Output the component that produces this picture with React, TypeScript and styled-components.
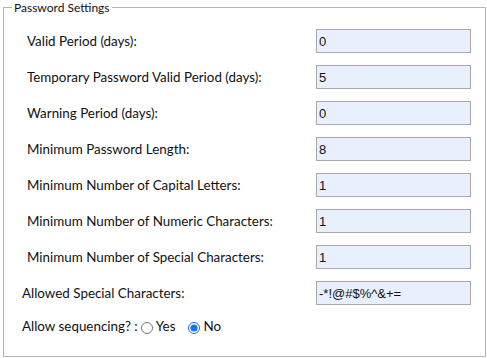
import React, { useState } from "react";
import styled, { createGlobalStyle } from "styled-components";

const GlobalStyle = createGlobalStyle`
    body {
        margin: 0;
        background: #ffffff;
        font-family: Lato, "Liberation Sans", sans-serif;
        color: #111111;
    }
`;

const Page = styled.div`
    padding: 0 1px 0 3px;
`;

const Fieldset = styled.fieldset`
    margin: 0;
    padding: 8px 0 15px 8px;
    border: 1px solid #b4b4b4;
    min-width: 0;
`;

const Legend = styled.legend`
    padding: 0 2px;
    font-size: 12px;
    line-height: 15px;
    color: #111111;
`;

const Row = styled.div<{ $indent: number; $height: number }>`
    display: grid;
    grid-template-columns: 1fr 155px;
    align-items: center;
    height: ${(p) => p.$height}px;
    padding-left: ${(p) => p.$indent}px;
    padding-right: 14px;
`;

const Label = styled.label`
    font-size: 13.4px;
    line-height: 18px;
`;

const TextBox = styled.input`
    box-sizing: border-box;
    width: 155px;
    height: 24px;
    margin: 0;
    padding: 0 2px;
    border: 1px solid #a8a8a8;
    border-radius: 0;
    background: #e8f0fe;
    font-family: "Liberation Sans", Arial, sans-serif;
    font-size: 13px;
    color: #111111;
    outline: none;
`;

const RadioLine = styled.div`
    display: flex;
    align-items: center;
    height: 30px;
    padding-left: 10px;
    font-size: 13.4px;
`;

const Option = styled.label`
    display: flex;
    align-items: center;
    margin-left: 3px;

    & + & {
        margin-left: 13px;
    }

    input {
        width: 12px;
        height: 12px;
        margin: 3px 3px 0 0;
        accent-color: #1a73e8;
    }
`;

const fields = [
    { label: "Valid Period (days):", value: "0" },
    { label: "Temporary Password Valid Period (days):", value: "5" },
    { label: "Warning Period (days):", value: "0" },
    { label: "Minimum Password Length:", value: "8" },
    { label: "Minimum Number of Capital Letters:", value: "1" },
    { label: "Minimum Number of Numeric Characters:", value: "1" },
    { label: "Minimum Number of Special Characters:", value: "1" },
];

const App = () => {
    const [sequencing, setSequencing] = useState("no");

    return (
        <Page>
            <GlobalStyle />
            <Fieldset>
                <Legend>Password Settings</Legend>
                {fields.map((item, index) => (
                    <Row key={index} $indent={15} $height={36}>
                        <Label>{item.label}</Label>
                        <TextBox defaultValue={item.value} />
                    </Row>
                ))}
                <Row $indent={10} $height={36}>
                    <Label>Allowed Special Characters:</Label>
                    <TextBox defaultValue="-*!@#$%^&+=" />
                </Row>
                <RadioLine>
                    Allow sequencing? :
                    <Option>
                        <input
                            type="radio"
                            name="seq"
                            checked={sequencing === "yes"}
                            onChange={() => setSequencing("yes")}
                        />
                        Yes
                    </Option>
                    <Option>
                        <input
                            type="radio"
                            name="seq"
                            checked={sequencing === "no"}
                            onChange={() => setSequencing("no")}
                        />
                        No
                    </Option>
                </RadioLine>
            </Fieldset>
        </Page>
    );
};

export default App;
